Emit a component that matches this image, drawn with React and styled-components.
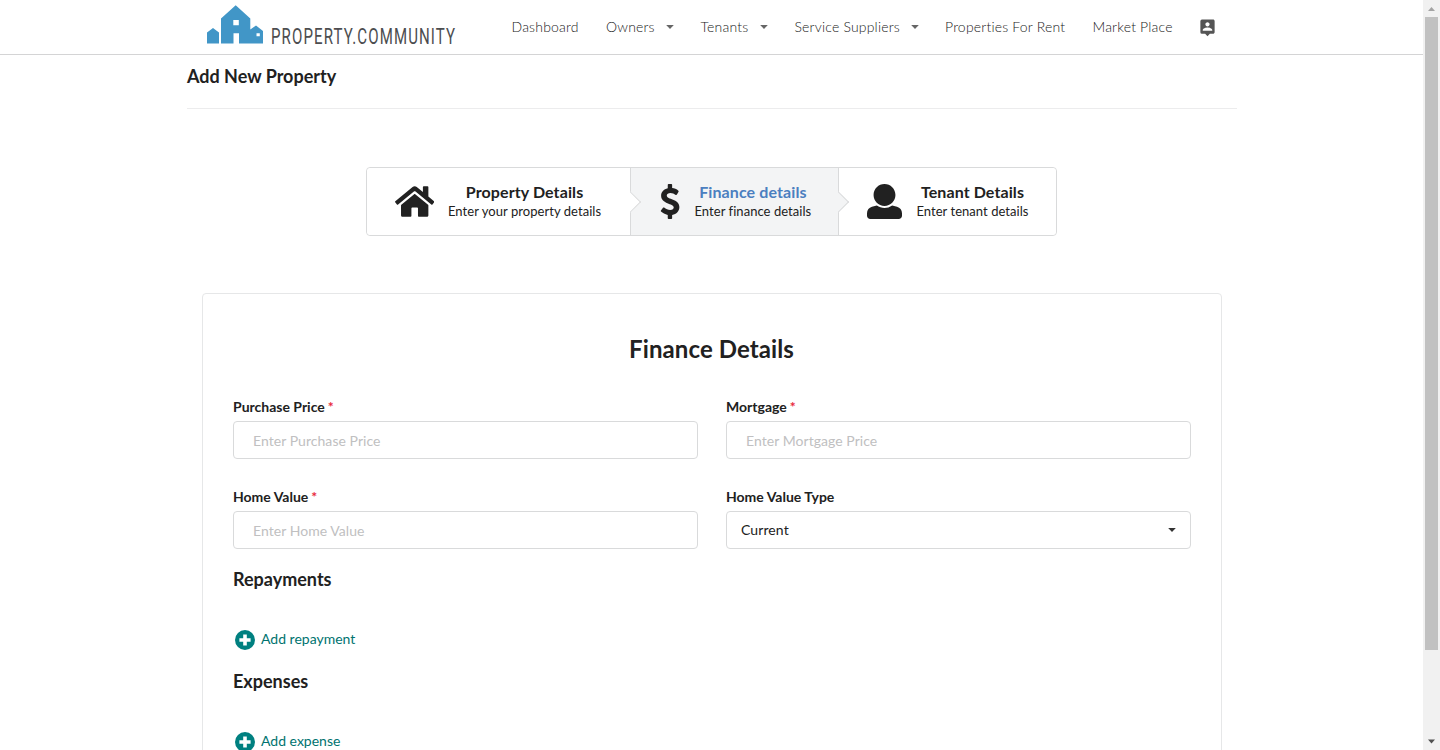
import React from "react";
import styled, { createGlobalStyle } from "styled-components";

const GlobalStyle = createGlobalStyle`
  *, *::before, *::after { box-sizing: border-box; }
  html, body { margin: 0; height: 100%; overflow: hidden; background: #fff; }
  body {
    font-family: Lato, "Liberation Sans", sans-serif;
    font-size: 14px;
    line-height: 20px;
    color: #212121;
  }
`;

const Window = styled.div`
  display: flex;
  width: 1440px;
  height: 750px;
  overflow: hidden;
`;

const Page = styled.div`
  flex: 1;
  min-width: 0;
`;

const Header = styled.header`
  display: flex;
  height: 55px;
  padding-left: 206px;
  border-bottom: 1px solid #d4d4d5;
`;

const Logo = styled.svg`
  display: block;
  width: 256px;
  height: 54px;
  overflow: visible;
`;

const Nav = styled.nav`
  display: flex;
  align-items: center;
  margin-left: 49.5px;
  height: 54px;
`;

const NavItem = styled.a`
  display: flex;
  align-items: center;
  flex: none;
  width: ${(p) => p.$width}px;
  font-weight: 300;
  letter-spacing: 0.19px;
  color: #222;
  white-space: nowrap;
`;

const Caret = styled.svg`
  width: 8px;
  height: 4px;
  margin-left: ${(p) => p.$gap || 0}px;
  fill: ${(p) => p.$color || "#666"};
`;

const ProfileIcon = styled.svg`
  width: 19px;
  height: 19px;
  fill: #555;
`;

const Content = styled.main`
  width: 1050px;
  margin-left: 187px;
`;

const PageTitle = styled.h3`
  margin: 0;
  height: 54px;
  padding-top: 10px;
  border-bottom: 1px solid #ececed;
  font-size: 18px;
  line-height: 23px;
  font-weight: 700;
`;

const Steps = styled.div`
  display: flex;
  width: 691px;
  height: 69px;
  margin: 58px 0 57px 179px;
  border: 1px solid #d9dadb;
  border-radius: 4px;
`;

const Step = styled.div`
  position: relative;
  display: flex;
  align-items: center;
  width: ${(p) => p.$width}px;
  padding-left: 28px;
  background: ${(p) => (p.$active ? "#f3f4f5" : "#fff")};
  border-right: ${(p) => (p.$last ? 0 : 1)}px solid #d9dadb;
  border-radius: ${(p) => (p.$last ? "0 4px 4px 0" : p.$active ? 0 : "4px 0 0 4px")};
`;

const StepArrow = styled.span`
  position: absolute;
  z-index: 1;
  top: 50%;
  right: -8px;
  width: 15px;
  height: 15px;
  background: ${(p) => (p.$active ? "#f3f4f5" : "#fff")};
  border: solid #d9dadb;
  border-width: 0 1px 1px 0;
  transform: translateY(-50%) rotate(-45deg);
`;

const StepIcon = styled.svg`
  flex: none;
  height: 35px;
  width: ${(p) => p.$width}px;
  margin: 0 ${(p) => p.$gap}px 1px 0;
  fill: #212121;
`;

const StepText = styled.div`
  text-align: center;
  white-space: nowrap;
`;

const StepTitle = styled.div`
  font-size: 16px;
  line-height: 18px;
  font-weight: 700;
  letter-spacing: 0.1px;
  color: ${(p) => (p.$active ? "#4b7fc0" : "#212121")};
`;

const StepNote = styled.div`
  margin: 2px 0 1px;
  font-size: 13px;
  line-height: 16px;
  letter-spacing: 0.05px;
`;

const Segment = styled.section`
  width: 1020px;
  height: 600px;
  margin-left: 15px;
  padding: 39px 30px;
  border: 1px solid #e6e7e8;
  border-radius: 4px;
`;

const SegmentTitle = styled.h2`
  margin: 0 1px 33px 0;
  font-size: 24px;
  line-height: 31px;
  font-weight: 700;
  letter-spacing: 0.1px;
  text-align: center;
`;

const FieldGrid = styled.div`
  display: grid;
  grid-template-columns: 465px 465px;
  column-gap: 28px;
  row-gap: 28px;
`;

const Field = styled.div`
  display: flex;
  flex-direction: column;
`;

const Label = styled.label`
  margin-bottom: 4px;
  line-height: 20px;
  height: 20px;
  font-weight: 700;
`;

const Required = styled.span`
  margin-left: 3px;
  color: #e8283c;
`;

const Input = styled.input`
  width: 100%;
  height: 38px;
  padding: 1px 19px 0;
  border: 1px solid #d9dadb;
  border-radius: 4px;
  font: inherit;
  letter-spacing: 0.05px;
  outline: 0;
  &::placeholder { color: #c0c0c1; opacity: 1; }
`;

const Select = styled.div`
  display: flex;
  align-items: center;
  justify-content: space-between;
  height: 38px;
  padding: 0 14px;
  border: 1px solid #d9dadb;
  border-radius: 4px;
  letter-spacing: 0.1px;
`;

const GroupTitle = styled.h3`
  margin: ${(p) => p.$top}px 0 38px;
  font-size: 18px;
  line-height: 23px;
  font-weight: 700;
`;

const AddLink = styled.a`
  display: flex;
  align-items: center;
  height: 22px;
  padding-left: 2px;
  gap: 6px;
  color: #00736f;
`;

const AddText = styled.span`
  margin-top: -2px;
`;

const AddIcon = styled.svg`
  width: 20px;
  height: 20px;
  fill: #008080;
`;

const Scrollbar = styled.div`
  display: flex;
  flex-direction: column;
  align-items: center;
  width: 17px;
  height: 750px;
  background: #f1f1f1;
`;

const ScrollButton = styled.svg`
  width: 17px;
  height: 17px;
  fill: ${(p) => p.$color};
`;

const ScrollThumb = styled.div`
  width: 13px;
  height: 633px;
  margin-bottom: 83px;
  background: #c1c1c1;
`;

const NAV_ITEMS = [
  { text: "Dashboard", width: 94.5 },
  { text: "Owners", width: 94.5, menu: true },
  { text: "Tenants", width: 94, menu: true },
  { text: "Service Suppliers", width: 150.5, menu: true },
  { text: "Properties For Rent", width: 147.5 },
  { text: "Market Place", width: 105.5 },
];

const STEPS = [
  {
    title: "Property Details",
    note: "Enter your property details",
    width: 264,
    box: "0 0 576 512",
    iconWidth: 39.4,
    gap: 13.6,
    path: "M488 312.7V456c0 13.3-10.7 24-24 24H348c-6.6 0-12-5.4-12-12V356c0-6.6-5.4-12-12-12h-72c-6.6 0-12 5.4-12 12v112c0 6.6-5.4 12-12 12H112c-13.3 0-24-10.7-24-24V312.7c0-3.6 1.6-7 4.4-9.3l188-154.8c4.4-3.6 10.8-3.6 15.3 0l188 154.8c2.7 2.3 4.3 5.7 4.3 9.3zm83.6-60.9L488 182.9V44.4c0-6.6-5.4-12-12-12h-56c-6.6 0-12 5.4-12 12V117l-89.5-73.7c-17.7-14.6-43.3-14.6-61 0L4.4 251.8c-5.1 4.2-5.8 11.8-1.6 16.9l25.5 31c4.2 5.1 11.8 5.8 16.9 1.6l235.2-193.7c4.4-3.6 10.8-3.6 15.3 0l235.2 193.7c5.1 4.2 12.7 3.5 16.9-1.6l25.5-31c4.2-5.2 3.4-12.7-1.7-16.9z",
  },
  {
    title: "Finance details",
    note: "Enter finance details",
    width: 208,
    active: true,
    box: "0 0 320 512",
    iconWidth: 21.9,
    gap: 13.6,
    path: "M113.411 169.375c0-23.337 21.536-38.417 54.865-38.417 26.726 0 54.116 12.263 76.461 28.333 5.88 4.229 14.13 2.354 17.575-4.017l23.552-43.549c2.649-4.898 1.596-10.991-2.575-14.68-24.281-21.477-59.135-34.09-91.289-37.806V12c0-6.627-5.373-12-12-12h-40c-6.627 0-12 5.373-12 12v49.832c-58.627 13.29-97.299 55.917-97.299 108.639 0 123.533 184.765 110.81 184.765 169.414 0 19.823-16.311 41.158-52.124 41.158-30.751 0-62.932-15.88-87.848-35.887-5.31-4.264-13.082-3.315-17.159 2.14l-30.389 40.667c-3.627 4.854-3.075 11.657 1.302 15.847 24.049 23.02 59.249 41.255 98.751 47.973V500c0 6.627 5.373 12 12 12h40c6.627 0 12-5.373 12-12v-47.438c65.72-10.215 106.176-59.186 106.176-116.516.001-119.688-184.564-103.156-184.564-166.671z",
  },
  {
    title: "Tenant Details",
    note: "Enter tenant details",
    width: 217,
    last: true,
    box: "0 0 512 512",
    iconWidth: 35,
    gap: 14.4,
    path: "M256 0c88.366 0 160 71.634 160 160s-71.634 160-160 160S96 248.366 96 160 167.634 0 256 0zm183.283 333.821l-71.313-17.828c-74.923 53.89-165.738 41.864-223.94 0l-71.313 17.828C29.981 344.505 0 382.903 0 426.955V464c0 26.51 21.49 48 48 48h416c26.51 0 48-21.49 48-48v-37.045c0-44.052-29.981-82.45-72.717-93.134z",
  },
];

function DropdownCaret({ gap, color }) {
  return (
    <Caret viewBox="0 0 8 4" $gap={gap} $color={color}>
      <path d="M.2 0h7.600L4 4z" />
    </Caret>
  );
}

function TextField({ label, placeholder }) {
  return (
    <Field>
      <Label>
        {label}
        <Required>*</Required>
      </Label>
      <Input placeholder={placeholder} />
    </Field>
  );
}

function AddButton({ children }) {
  return (
    <AddLink>
      <AddIcon viewBox="0 0 20 20">
        <path
          fillRule="evenodd"
          d="M10 0a10 10 0 1 0 0 20a10 10 0 1 0 0-20zM8.2 4.400h3.600v3.800h3.800v3.600h-3.800v3.800h-3.600v-3.800H4.400v-3.600h3.800z"
        />
      </AddIcon>
      <AddText>{children}</AddText>
    </AddLink>
  );
}

export default function App() {
  return (
    <Window>
      <GlobalStyle />
      <Page>
        <Header>
          <Logo viewBox="0 0 256 54">
            <path
              fill="#4196c7"
              fillRule="evenodd"
              d="M1 43.500V32.500L7 28l6 4.500V43.500zM15 43.500V18.500L29.700 5.300l14.600 13.200V29.500L50 25.500l7 5.500V43.500H33V33.300h-5.500V43.500zM27.300 20v5.200h5.500v-5.200zM50.500 33.300v3h3.300v-3z"
            />
            <text
              transform="translate(65 43.500) scale(0.7 1)"
              fontFamily="Roboto, sans-serif"
              fontSize="21.500"
              fontWeight="400"
              fill="#4c4d4f"
              textLength="263"
              lengthAdjust="spacing"
            >
              PROPERTY.COMMUNITY
            </text>
          </Logo>
          <Nav>
            {NAV_ITEMS.map((item) => (
              <NavItem key={item.text} $width={item.width}>
                {item.text}
                {item.menu && <DropdownCaret gap={11.4} />}
              </NavItem>
            ))}
            <ProfileIcon viewBox="0 0 24 24">
              <path d="M19 2H5a2 2 0 0 0-2 2v14a2 2 0 0 0 2 2h4l3 3 3-3h4c1.100 0 2-.9 2-2V4c0-1.100-.9-2-2-2zm-7 3.300c1.490 0 2.700 1.210 2.700 2.700 0 1.490-1.210 2.700-2.700 2.700-1.490 0-2.700-1.210-2.700-2.700 0-1.490 1.210-2.700 2.700-2.700zM18 16H6v-.9c0-2 4-3.100 6-3.100s6 1.100 6 3.100v.9z" />
            </ProfileIcon>
          </Nav>
        </Header>
        <Content>
          <PageTitle>Add New Property</PageTitle>
          <Steps>
            {STEPS.map((s) => (
              <Step key={s.title} $width={s.width} $active={s.active} $last={s.last}>
                <StepIcon viewBox={s.box} $width={s.iconWidth} $gap={s.gap}>
                  <path d={s.path} />
                </StepIcon>
                <StepText>
                  <StepTitle $active={s.active}>{s.title}</StepTitle>
                  <StepNote>{s.note}</StepNote>
                </StepText>
                {!s.last && <StepArrow $active={s.active} />}
              </Step>
            ))}
          </Steps>
          <Segment>
            <SegmentTitle>Finance Details</SegmentTitle>
            <FieldGrid>
              <TextField label="Purchase Price" placeholder="Enter Purchase Price" />
              <TextField label="Mortgage" placeholder="Enter Mortgage Price" />
              <TextField label="Home Value" placeholder="Enter Home Value" />
              <Field>
                <Label>Home Value Type</Label>
                <Select>
                  Current
                  <DropdownCaret color="#333" />
                </Select>
              </Field>
            </FieldGrid>
            <GroupTitle $top={19}>Repayments</GroupTitle>
            <AddButton>Add repayment</AddButton>
            <GroupTitle $top={19}>Expenses</GroupTitle>
            <AddButton>Add expense</AddButton>
          </Segment>
        </Content>
      </Page>
      <Scrollbar>
        <ScrollButton viewBox="0 0 17 17" $color="#a3a3a3">
          <path d="M5 11l3.500-4 3.500 4z" />
        </ScrollButton>
        <ScrollThumb />
        <ScrollButton viewBox="0 0 17 17" $color="#505050">
          <path d="M5 6.500l3.500 4 3.500-4z" />
        </ScrollButton>
      </Scrollbar>
    </Window>
  );
}
